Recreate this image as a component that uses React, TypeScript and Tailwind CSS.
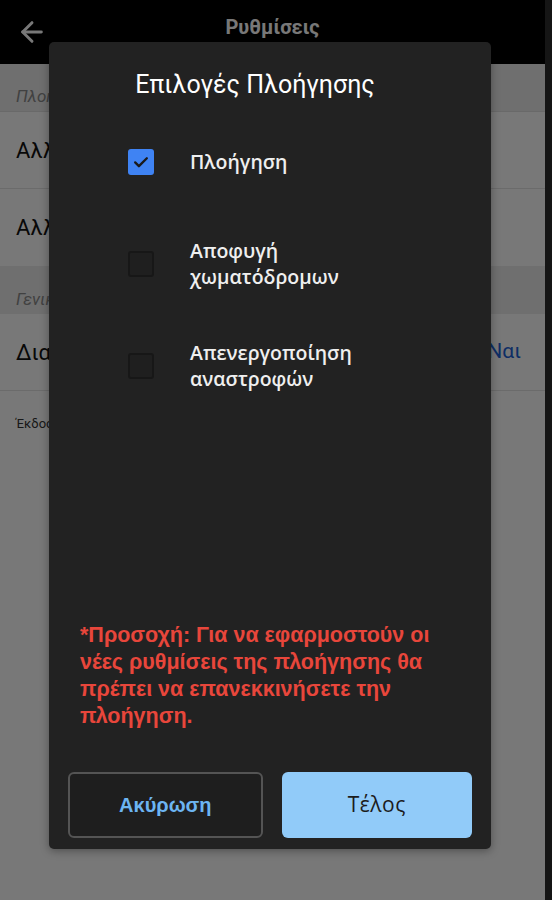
import { ArrowLeft } from "lucide-react";

const options = [
  { id: "nav", label: ["Πλοήγηση"], checked: true },
  { id: "dirt", label: ["Αποφυγή", "χωματόδρομων"], checked: false },
  { id: "uturn", label: ["Απενεργοποίηση", "αναστροφών"], checked: false },
];

function Checkbox({ checked }: { checked: boolean }) {
  if (checked) {
    return (
      <div className="w-[26px] h-[26px] rounded-[3px] bg-[#3f83f3] flex items-center justify-center shrink-0">
        <svg width="20" height="20" viewBox="0 0 24 24" fill="none">
          <path
            d="M5 12.5l4.5 4.5L19 7.5"
            stroke="#1a1a1a"
            strokeWidth="2.8"
            strokeLinecap="round"
            strokeLinejoin="round"
          />
        </svg>
      </div>
    );
  }
  return (
    <div className="w-[26px] h-[26px] rounded-[3px] border-2 border-[#171717] bg-[#1f1f1f] shrink-0" />
  );
}

function SettingsPage() {
  return (
    <div className="w-[545px] h-full bg-white font-['Roboto',sans-serif]">
      <header className="h-[64px] bg-black flex items-center relative">
        <div className="pl-[16px] text-white">
          <ArrowLeft size={32} strokeWidth={2.2} />
        </div>
        <h1 className="absolute left-0 right-0 text-center text-[20px] font-bold text-white -mt-[10px]">
          Ρυθμίσεις
        </h1>
      </header>
      <div className="h-[48px] bg-[#ececec] flex items-end pb-[2px] px-[16px] border-b border-[#e0e0e0]">
        <span className="italic text-[17px] text-[#8a8a8a]">Πλοήγηση</span>
      </div>
      <div className="h-[77px] flex items-center px-[16px] border-b border-[#e4e4e4]">
        <span className="text-[22px] text-[#111]">Αλλαγή χάρτη</span>
      </div>
      <div className="h-[77px] flex items-center px-[16px]">
        <span className="text-[22px] text-[#111]">Αλλαγή φωνής</span>
      </div>
      <div className="h-[48px] bg-[#ececec] flex items-end pb-[2px] px-[16px]">
        <span className="italic text-[17px] text-[#8a8a8a]">Γενικά</span>
      </div>
      <div className="h-[77px] flex items-center justify-between px-[16px] border-b border-[#e4e4e4]">
        <span className="text-[22px] text-[#111]">Διατήρηση οθόνης</span>
        <span className="text-[21px] text-[#1e63d6] pr-[8px]">Ναι</span>
      </div>
      <div className="px-[16px] pt-[20px]">
        <span className="text-[13px] text-[#333]">Έκδοση 2.4.1</span>
      </div>
    </div>
  );
}

export default function App() {
  return (
    <div className="relative w-[552px] h-[900px] bg-[#2e2e2e] overflow-hidden">
      <SettingsPage />
      <div className="absolute inset-0 bg-black/[0.53]" />
      <div className="absolute left-[49px] top-[42px] w-[442px] h-[807px] bg-[#222222] rounded-[5px] flex flex-col px-[19px] pb-[11px] shadow-[0_2px_8px_rgba(0,0,0,0.35)]">
        <h2 className="text-center text-white text-[25px] pt-[25px] pr-[30px] leading-[36px] font-['Roboto',sans-serif]">
          Επιλογές Πλοήγησης
        </h2>
        <div className="flex flex-col mt-[8px] pl-[60px]">
          {options.map((o) => (
            <div key={o.id} className="h-[102px] flex items-center gap-[36px]">
              <Checkbox checked={o.checked} />
              <div className="text-[19.5px] leading-[26px] font-semibold text-[#efefef] font-['Open_Sans',sans-serif]">
                {o.label.map((l) => (
                  <div key={l}>{l}</div>
                ))}
              </div>
            </div>
          ))}
        </div>
        <div className="flex-1" />
        <p className="pl-[12px] pr-[4px] text-[#e8463b] font-bold text-[21.5px] leading-[27px] font-['Liberation_Sans',Arial,sans-serif]">
          *Προσοχή: Για να εφαρμοστούν οι νέες ρυθμίσεις της πλοήγησης θα
          πρέπει να επανεκκινήσετε την πλοήγηση.
        </p>
        <div className="flex gap-[19px] mt-[42px]">
          <button className="flex-1 h-[66px] rounded-[6px] border-2 border-[#545454] bg-[#1e1e1e] text-[#6cb4f2] font-bold text-[20px] font-['Liberation_Sans',Arial,sans-serif]">
            Ακύρωση
          </button>
          <button className="flex-1 h-[66px] rounded-[6px] bg-[#91cbf9] text-[#1c1c1c] text-[21px] tracking-[0.5px] font-['Open_Sans',sans-serif]">
            Τέλος
          </button>
        </div>
      </div>
    </div>
  );
}
